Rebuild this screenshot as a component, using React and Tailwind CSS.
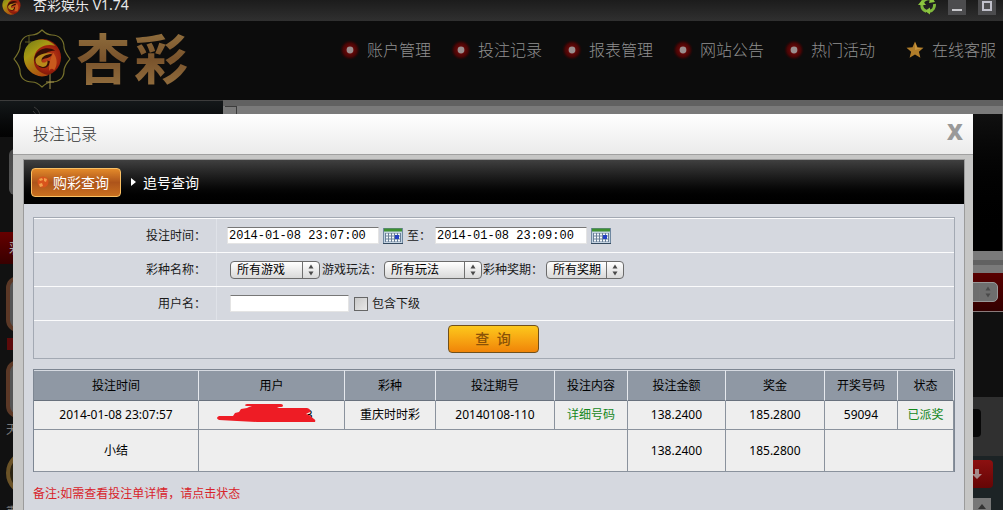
import React from "react";

const NAV_ITEMS = ["账户管理", "投注记录", "报表管理", "网站公告", "热门活动"];

const COLUMNS = [
  { title: "投注时间", width: 165 },
  { title: "用户", width: 146 },
  { title: "彩种", width: 91 },
  { title: "投注期号", width: 119 },
  { title: "投注内容", width: 73 },
  { title: "投注金额", width: 98 },
  { title: "奖金", width: 99 },
  { title: "开奖号码", width: 73 },
  { title: "状态", width: 56 },
];

function Orb({ id, className }) {
  return (
    <svg viewBox="0 0 40 40" className={className} aria-hidden="true">
      <defs>
        <radialGradient id={id + "r"} cx="0.65" cy="0.5" r="0.6">
          <stop offset="0" stopColor="#c0441c" />
          <stop offset="0.6" stopColor="#9a1f0c" />
          <stop offset="1" stopColor="#5c1306" />
        </radialGradient>
        <linearGradient id={id + "g"} x1="0" y1="0" x2="0.6" y2="1">
          <stop offset="0" stopColor="#6f7a16" />
          <stop offset="0.4" stopColor="#a89a14" />
          <stop offset="1" stopColor="#b0480f" />
        </linearGradient>
      </defs>
      <circle cx="20" cy="20" r="19" fill={"url(#" + id + "r)"} />
      <path d="M33 8C24-2 7 0 2 12c-4 11 2 24 14 27 4 1 8 0 10-1C14 36 9 27 12 18c2-8 11-13 21-10z" fill={"url(#" + id + "g)"} />
      <path d="M13 17c3-6 13-9 20-4-6 0-8 2-11 3 3 1 5 0 8 1-3 5-9 3-11 6-1 3 2 5 5 3l1-3 3 1c-1 7-9 9-13 4-4-3-4-8-2-11z" fill="#350e06" />
      <path d="M13 21c4-5 10-6 17-5-6 1-11 3-11 7 0 3 4 3 6 0 1 5-3 8-7 6-4-1-6-4-5-8z" fill="#b98a1a" />
      <path d="M31 15c4 5 5 12 1 18-2-2-4-2-5 1-1-7 1-13 4-19z" fill="#c85a1d" />
    </svg>
  );
}

function Emblem() {
  return (
    <div className="relative size-[60px] shrink-0">
      <svg viewBox="0 0 60 60" className="size-full" fill="none" stroke="#77722c" strokeWidth="1.2" aria-hidden="true">
        <path d="M30 1c3 3 6 5 10 5 7 0 12 5 12 12 0 4 3 8 6 12-3 4-6 7-6 12 0 7-5 11-12 11-4 0-7 2-10 5-3-3-6-5-10-5-7 0-12-4-12-11 0-5-3-8-6-12 3-4 6-8 6-12C8 11 13 6 20 6c4 0 7-2 10-5z" />
        <path d="M38 44v16M34 53h8" stroke="#a0904a" strokeWidth="1" />
        <path d="M17 7v10M13 13h8" stroke="#5d5a22" strokeWidth="1" />
      </svg>
      <Orb id="emblem" className="absolute left-[11px] top-[9px] size-[39px]" />
    </div>
  );
}

function Bullet() {
  return (
    <svg viewBox="0 0 20 20" className="size-5 shrink-0" aria-hidden="true">
      <defs>
        <radialGradient id="bullet">
          <stop offset="0.3" stopColor="#6a0808" />
          <stop offset="0.7" stopColor="#460505" />
          <stop offset="1" stopColor="#1c0606" stopOpacity="0.2" />
        </radialGradient>
      </defs>
      <circle cx="10" cy="10" r="10" fill="url(#bullet)" />
      <circle cx="10" cy="10" r="3.4" fill="#9b8f8f" />
    </svg>
  );
}

function Star() {
  return (
    <svg viewBox="0 0 20 20" className="size-5 shrink-0" aria-hidden="true">
      <path d="M10 1.5l2.5 5.8 6 .4-4.6 4 1.5 6.1L10 14.6l-5.4 3.2 1.5-6.1-4.6-4 6-.4z" fill="#b07d2a" />
      <path d="M10 2.500l2 5.300 4.500.4L10 10z" fill="#c8953f" />
    </svg>
  );
}

function CalendarButton({ label }) {
  return (
    <button type="button" aria-label={label} className="mx-1 h-4 w-5 shrink-0">
      <svg viewBox="0 0 20 16" className="h-4 w-5" aria-hidden="true">
        <rect x="0.5" y="0.5" width="19" height="15" fill="#c4d3e2" stroke="#6f88a0" />
        <rect x="1" y="0.5" width="18" height="3" fill="#3f9031" />
        <rect x="2" y="5" width="16" height="9" fill="#6a8098" />
        {[5, 8, 11].map((y) =>
          [2, 5, 8, 11, 14].map((x) => (
            <rect key={x + "-" + y} x={x + 1} y={y + 0.5} width="2" height="2" fill="#f4f8fb" />
          ))
        )}
        <rect x="12" y="7" width="4" height="4" fill="#2440c4" />
        <path d="M0 15.500h20" stroke="#33495e" />
      </svg>
    </button>
  );
}

function Arrows() {
  return (
    <svg viewBox="0 0 18 18" className="pointer-events-none absolute right-0 top-0 size-[18px]" aria-hidden="true">
      <path d="M0.5 1v16" stroke="#707070" />
      <path d="M6.500 7.500L9 3.500l2.500 4zM6.500 10.500L9 14.500l2.500-4z" fill="#4a4a4a" />
    </svg>
  );
}

function Picker({ id, value, className }) {
  return (
    <div className={"relative h-[18px] shrink-0 " + className}>
      <select
        id={id}
        className="h-full w-full appearance-none rounded-[4px] border border-[#6b6b6b] bg-linear-to-b from-white to-[#d9d9d9] pl-1.5 text-[12px] leading-4 text-black"
      >
        <option>{value}</option>
      </select>
      <Arrows />
    </div>
  );
}

function FormRow({ label, htmlFor, children }) {
  return (
    <div className="flex h-[34px] items-stretch border-b border-[#fbfbfc]">
      <label htmlFor={htmlFor} className="flex w-[183px] shrink-0 items-center justify-end border-r border-[#dfe2e8] pr-2.5">
        {label}
      </label>
      <div className="flex items-center pl-2.5">{children}</div>
    </div>
  );
}

function DateInput({ id, value, label }) {
  return (
    <input
      id={id}
      aria-label={label}
      defaultValue={value}
      className="h-[17px] w-[152px] shrink-0 border border-[#e4e4e4] border-t-[#777] bg-white px-px font-['Liberation_Mono',monospace] text-[12px] leading-4 text-black"
    />
  );
}

function TitleBar() {
  return (
    <div className="flex h-[21px] shrink-0 items-end overflow-hidden bg-linear-to-b from-[#1c1c1c] to-[#303030] pb-1.5">
      <Orb id="app" className="ml-0.5 size-[19px]" />
      <h1 className="ml-3 text-[14px] leading-5 text-[#e8e8e8]">杏彩娱乐 V1.74</h1>
      <div className="ml-auto flex items-end gap-3 pr-[7px]">
        <button type="button" aria-label="刷新" className="-mr-0.5">
          <svg viewBox="0 0 20 20" className="size-5" fill="none" aria-hidden="true">
            <path d="M4.500 7.500A6.500 6.500 0 0 1 14 5M3.800 10a6.500 6.500 0 0 0 4.500 6.200M11.500 16.300A6.500 6.500 0 0 0 16.400 9" stroke="#7fb83c" strokeWidth="3" />
            <path d="M0 10l4-5 4 5zM13 1l4 6-6 1zM12 12.500v7l-5-3.500z" fill="#8dc63f" />
          </svg>
        </button>
        <button type="button" aria-label="最小化" className="flex size-[18px] items-end justify-center bg-[#4c4c4e] pb-1">
          <span className="h-0.5 w-2.5 bg-[#c8c8cc]" />
        </button>
        <button type="button" aria-label="最大化" className="flex size-[18px] items-end justify-center bg-[#4c4c4e] pb-1">
          <span className="size-2.5 border-2 border-[#c0c0ca]" />
        </button>
      </div>
    </div>
  );
}

function Header() {
  return (
    <header className="flex h-[79px] shrink-0 items-start justify-between bg-[#0c0c0c] pl-3">
      <div className="flex items-center pt-2">
        <Emblem />
        <span className="ml-1 flex gap-1 bg-linear-to-b from-[#92713f] via-[#79532c] to-[#94703f] bg-clip-text text-[54px] font-bold leading-[60px] text-transparent">
          <span>杏</span>
          <span>彩</span>
        </span>
      </div>
      <nav className="flex gap-5 pr-[7px] pt-[17px] text-[16px] font-light leading-6 text-[#909090]">
        {NAV_ITEMS.map((item) => (
          <a key={item} href="#" className="flex items-center gap-[7px] whitespace-nowrap">
            <Bullet />
            {item}
          </a>
        ))}
        <a href="#" className="ml-2.5 flex items-center gap-[7px] whitespace-nowrap">
          <Star />
          在线客服
        </a>
      </nav>
    </header>
  );
}

function Sidebar() {
  return (
    <aside className="w-[223px] shrink-0 overflow-hidden border-t border-[#3c3c3c] bg-[#111] text-[12px] text-[#777]">
      <div className="h-9 bg-linear-to-b from-[#14181a] to-[#030303] pl-8 pt-1">
        <svg viewBox="0 0 10 12" className="h-3 w-2.5" fill="none" stroke="#3c3c3c" aria-hidden="true">
          <path d="M1 6q3 2 3 6M2 2q6 3 6 10" />
        </svg>
      </div>
      <div className="ml-[9px] mt-3 h-[46px] rounded-md bg-linear-to-b from-[#4a4a4a] to-[#555]" />
      <div className="mt-[37px] h-8 bg-linear-to-b from-[#600] to-[#380000] pl-[9px] text-[14px] leading-8 text-[#aaa]">彩种</div>
      <div className="ml-1.5 mt-3 h-[56px] w-[60px] rounded-xl border-4 border-[#5b3826] bg-[#555]" />
      <div className="ml-[7px] mt-1.5 h-3 w-4 bg-[#5c0a0a]" />
      <div className="ml-1.5 mt-2.5 h-[58px] w-[60px] rounded-xl border-4 border-[#5b3826] bg-[#555]" />
      <div className="ml-1.5 h-6 leading-6">天津</div>
      <div className="ml-1.5 mt-2 size-[46px] rounded-full border-4 border-[#6b5327] bg-[#2c2412]" />
      <div className="ml-1.5 mt-2 leading-4">重庆</div>
    </aside>
  );
}

function Lobby() {
  return (
    <main className="min-w-0 flex-1 overflow-hidden bg-[#0f0f0f]">
      <div className="h-1.5 bg-[#616161]" />
      <div className="h-2 bg-[#7a7a7a] pl-0.5">
        <div className="h-2 w-3 border-r border-t border-[#3c3c3c]" />
      </div>
      <div className="h-[137px] border-r border-[#555] bg-linear-to-b from-[#101010] to-black" />
      <div className="h-[9px] bg-[#7a7a7a]" />
      <div className="h-[5px] bg-[#616161]" />
      <div className="h-2 bg-[#7a7a7a]" />
      <div className="flex h-[39px] items-center justify-end border-b border-[#8a7a7a] bg-linear-to-b from-[#5a0000] to-[#330000] pr-[5px]">
        <div className="relative h-5 w-20 rounded-[5px] border border-[#999] bg-[#6e6e6e]">
          <Arrows />
        </div>
      </div>
      <div className="h-[85px] bg-[#101010]" />
      <div className="h-[59px] bg-[#303030] pr-[22px] pt-3">
        <div className="ml-auto h-7 w-20 rounded-sm bg-[#080808]" />
      </div>
      <div className="h-[60px] bg-[#1c2325] pt-1">
        <div className="ml-auto mr-2.5 flex h-7 w-20 items-center justify-end rounded-[4px] bg-linear-to-b from-[#8c1010] to-[#650606] pr-2">
          <svg viewBox="0 0 16 16" className="size-4" aria-hidden="true">
            <path d="M6 3h4v5h3l-5 5-5-5h3z" fill="#a58a8a" />
          </svg>
        </div>
        <div className="ml-auto mr-3 mt-2.5 flex h-5 w-[18px] justify-center bg-[#777] pt-1">
          <svg viewBox="0 0 10 10" className="size-2.5" aria-hidden="true">
            <path d="M1 7l4-5 4 5z" fill="#333" />
          </svg>
        </div>
      </div>
    </main>
  );
}

function SearchForm() {
  return (
    <form className="border border-[#a3a9b3]" onSubmit={(e) => e.preventDefault()}>
      <div className="border-t border-[#fbfbfc]" />
      <FormRow label="投注时间：" htmlFor="from">
        <DateInput id="from" value="2014-01-08 23:07:00" />
        <CalendarButton label="选择开始时间" />
        <label htmlFor="to" className="shrink-0">至：</label>
        <span className="w-1" />
        <DateInput id="to" value="2014-01-08 23:09:00" />
        <CalendarButton label="选择结束时间" />
      </FormRow>
      <FormRow label="彩种名称：" htmlFor="lottery">
        <span className="w-[3px]" />
        <Picker id="lottery" value="所有游戏" className="w-[90px]" />
        <label htmlFor="play" className="ml-0.5 shrink-0">游戏玩法：</label>
        <Picker id="play" value="所有玩法" className="ml-0.5 w-[98px]" />
        <label htmlFor="issue" className="ml-px shrink-0">彩种奖期：</label>
        <Picker id="issue" value="所有奖期" className="ml-[3px] w-[78px]" />
      </FormRow>
      <FormRow label="用户名：" htmlFor="user">
        <span className="w-[3px]" />
        <input id="user" className="h-[17px] w-[119px] border border-[#e4e4e4] border-t-[#777] bg-white px-1" />
        <input
          id="sub"
          type="checkbox"
          className="ml-[5px] size-3.5 appearance-none border border-[#666] bg-linear-to-br from-[#c9c9c9] to-[#e8e8e8]"
        />
        <label htmlFor="sub" className="ml-1">包含下级</label>
      </FormRow>
      <div className="flex h-[37px] items-center justify-center pb-0.5 pr-0.5">
        <button
          type="submit"
          className="h-7 w-[91px] rounded-[4px] border border-[#70501c] bg-linear-to-b from-[#fcc81c] to-[#f08408] text-[14px] font-medium leading-6 text-[#8a5207]"
        >
          查&nbsp; 询
        </button>
      </div>
    </form>
  );
}

function MaskedUser() {
  return (
    <div className="relative mx-auto flex h-5 w-[110px] items-center justify-end pr-3.5">
      <span className="mr-10">g</span>
      <span>3</span>
      <svg viewBox="0 0 100 22" className="absolute -top-0.5 left-0 h-[22px] w-[100px]" fill="#ee1c25" aria-hidden="true">
        <path d="M28 2.500q0-1.500 2-1.500h34q2 0 2 1.500t-2 1.500h-4l2 1h28q4 1 3 4l-4 2 3 1 5 4q2 1 1 3H40l-20-1-18-1q-2-1-2-2t2-2h14l2-3 4-1 2-3 6-1 2-1 3-1h-5q-2 0-2-1.500z" />
      </svg>
    </div>
  );
}

function ResultTable() {
  const total = COLUMNS.reduce((sum, c) => sum + c.width, 0);
  const cell = "border-b border-r border-[#8a929d] p-0";
  return (
    <table className="mt-2.5 w-full table-fixed border-separate border-spacing-0 border border-b-0 border-[#7d8692] bg-[#eee] text-center text-black">
      <colgroup>
        {COLUMNS.map((c) => (
          <col key={c.title} style={{ width: (c.width / total) * 100 + "%" }} />
        ))}
      </colgroup>
      <thead>
        <tr className="h-[31px] bg-[#8f98a4]">
          {COLUMNS.map((c) => (
            <th key={c.title} className="border-r border-t border-b border-r-[#e6e9ee] border-t-[#d5d9e0] border-b-[#68717d] p-0 font-normal">
              {c.title}
            </th>
          ))}
        </tr>
      </thead>
      <tbody>
        <tr className="h-[29px]">
          <td className={cell}>2014-01-08 23:07:57</td>
          <td className={cell}><MaskedUser /></td>
          <td className={cell}>重庆时时彩</td>
          <td className={cell}>20140108-110</td>
          <td className={cell}><a href="#" className="text-[#14871c]">详细号码</a></td>
          <td className={cell}>138.2400</td>
          <td className={cell}>185.2800</td>
          <td className={cell}>59094</td>
          <td className={cell}><a href="#" className="text-[#14871c]">已派奖</a></td>
        </tr>
        <tr className="h-[42px]">
          <td className={cell}>小结</td>
          <td className={cell} colSpan={4} />
          <td className={cell}>138.2400</td>
          <td className={cell}>185.2800</td>
          <td className={cell} colSpan={2} />
        </tr>
      </tbody>
    </table>
  );
}

function Dialog() {
  return (
    <section role="dialog" aria-label="投注记录" className="absolute bottom-0 left-[13px] right-[30px] top-[114px] flex flex-col overflow-hidden bg-[#c6c6c5]">
      <div className="flex h-[41px] shrink-0 items-center justify-between border-b border-[#a0a0a0] bg-linear-to-b from-white to-[#ebebeb] pl-5 pr-2.5">
        <h2 className="text-[16px] font-light text-[#333]">投注记录</h2>
        <button type="button" aria-label="关闭" className="pb-1.5 font-['Open_Sans',sans-serif] text-[22px] font-extrabold leading-6 text-[#999]">
          X
        </button>
      </div>
      <div className="ml-2.5 mr-2 mt-1 flex-1 border-x border-t border-[#9b9b9b] bg-[#d5d8df]">
        <div className="flex h-11 items-center bg-linear-to-b from-[#404040] to-black pl-[7px] text-[14px] text-white">
          <button type="button" className="flex h-[29px] w-[90px] items-center gap-1 rounded-[4px] border border-[#fac064] bg-linear-to-b from-[#e38a2a] via-[#ad541b] to-[#c9701f] pl-[5px]">
            <svg viewBox="0 0 12 12" className="size-3 shrink-0" aria-hidden="true">
              <circle cx="6" cy="6" r="5.500" fill="#d9541c" />
              <path d="M2 3l3-1 1 2-3 1zM7 2l3 1-1 3-2-1zM2 8l3-1 1 3-3 1z" fill="#f4a04a" />
            </svg>
            购彩查询
          </button>
          <svg viewBox="0 0 5 8" className="ml-2.5 h-2 w-[5px]" aria-hidden="true">
            <path d="M0 0l5 4-5 4z" fill="#fff" />
          </svg>
          <a href="#" className="ml-[7px]">追号查询</a>
        </div>
        <div className="px-[9px] pt-[13px] text-[12px] leading-4 text-[#1a1a1a]">
          <SearchForm />
          <ResultTable />
          <p className="mt-3.5 text-[#d8242b]">备注:如需查看投注单详情，请点击状态</p>
        </div>
      </div>
    </section>
  );
}

export default function App() {
  return (
    <div className="relative flex h-screen flex-col overflow-hidden bg-[#111] font-['Noto_Sans','Noto_Sans_CJK_SC',sans-serif]">
      <TitleBar />
      <Header />
      <div className="flex min-h-0 flex-1">
        <Sidebar />
        <Lobby />
      </div>
      <Dialog />
    </div>
  );
}
